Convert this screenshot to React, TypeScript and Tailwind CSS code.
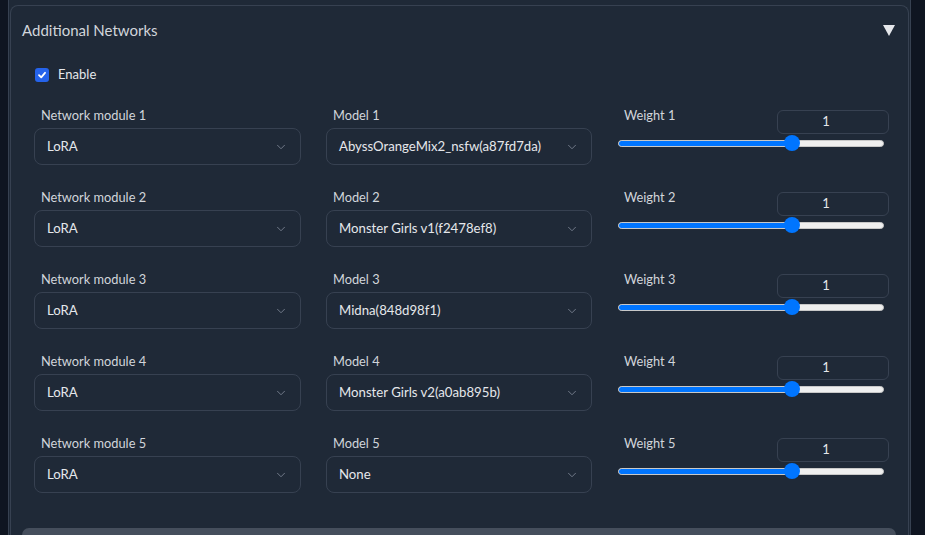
import { ChevronDown } from 'lucide-react';

const rows = [
  { n: 1, model: 'AbyssOrangeMix2_nsfw(a87fd7da)' },
  { n: 2, model: 'Monster Girls v1(f2478ef8)' },
  { n: 3, model: 'Midna(848d98f1)' },
  { n: 4, model: 'Monster Girls v2(a0ab895b)' },
  { n: 5, model: 'None' },
];

function Select({ label, value, width }: { label: string; value: string; width: string }) {
  return (
    <div className={`flex flex-col ${width}`}>
      <div className="pl-[7px] h-4 leading-4 text-[12.8px] text-[#d1d5db]">{label}</div>
      <div className="mt-[5px] h-[37px] rounded-lg border border-[#374151] flex items-center justify-between pl-[12px] pr-[12px] pt-[2px]">
        <span className="text-[13.2px] text-[#e5e7eb]">{value}</span>
        <ChevronDown size={14} strokeWidth={1.5} className="text-[#7b8494]" />
      </div>
    </div>
  );
}

function Weight({ n }: { n: number }) {
  const pct = 65.5;
  return (
    <div className="w-[272px] flex flex-col">
      <div className="flex justify-between items-start">
        <div className="pl-[7px] h-4 leading-4 text-[12.8px] text-[#d1d5db]">Weight {n}</div>
        <div className="mt-[3px] w-[112px] h-[24px] rounded-md border border-[#374151] flex items-center justify-center pr-[14px] text-[13px] text-[#e5e7eb]">
          1
        </div>
      </div>
      <div className="relative mt-[6px] ml-[1px] w-[266px] h-[7px] rounded-full bg-[#efefef] border border-[#c8c8c8]">
        <div className="h-full rounded-full bg-[#0075ff]" style={{ width: `${pct}%` }} />
        <div
          className="absolute top-1/2 w-4 h-4 -mt-2 -ml-2 rounded-full bg-[#0075ff]"
          style={{ left: `${pct}%` }}
        />
      </div>
    </div>
  );
}

export default function App() {
  return (
    <div className="w-[925px] h-[535px] overflow-hidden bg-[#0f1521] font-['Lato','Noto_Sans',sans-serif]">
      <div className="ml-[8px] w-[903px] h-full bg-[#1f2937] border-x border-[#374151] pt-[5px] pl-[1px] pr-[1px]">
        <div className="h-full rounded-t-lg border border-[#374151] border-b-0 bg-[#1f2937] flex flex-col">
          {/* header */}
          <div className="flex items-center justify-between pl-[11px] pr-[13px] pt-[13px] h-[35px]">
            <span className="text-[15px] text-[#d1d5db]">Additional Networks</span>
            <svg width="12" height="11" viewBox="0 0 12 11">
              <path d="M0 0 H12 L6 11 Z" fill="#e5e7eb" />
            </svg>
          </div>

          {/* enable */}
          <div className="flex items-center gap-[9px] pl-[24px] mt-[24px]">
            <div className="w-[14px] h-[14px] rounded-[3px] bg-[#2563eb] flex items-center justify-center">
              <svg width="10" height="10" viewBox="0 0 10 10">
                <path d="M2 5.2 L4.2 7.3 L8 2.8" stroke="white" strokeWidth="1.8" fill="none" strokeLinecap="round" strokeLinejoin="round" />
              </svg>
            </div>
            <span className="text-[13px] text-[#e5e7eb]">Enable</span>
          </div>

          {/* rows */}
          <div className="flex flex-col gap-[24px] pl-[23px] mt-[22px]">
            {rows.map((r) => (
              <div key={r.n} className="flex gap-[25px]">
                <Select label={`Network module ${r.n}`} value="LoRA" width="w-[267px]" />
                <Select label={`Model ${r.n}`} value={r.model} width="w-[266px]" />
                <Weight n={r.n} />
              </div>
            ))}
          </div>

          <div className="mt-auto ml-[11px] w-[874px] h-[7px] rounded-t-lg bg-[#454e5c]" />
        </div>
      </div>
    </div>
  );
}
